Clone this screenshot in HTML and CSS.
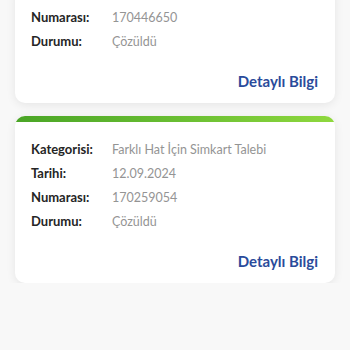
FILE: index.html
```html
<!DOCTYPE html>
<html lang="tr">
<head>
<meta charset="utf-8">
<link rel="stylesheet" href="styles.css">
</head>
<body>
<div class="list">
  <div class="card">
    <div class="bar"></div>
    <div class="body">
      <div class="row"><span class="label">Numarası:</span><span class="value">170446650</span></div>
      <div class="row"><span class="label">Durumu:</span><span class="value">Çözüldü</span></div>
      <div class="actions"><a class="link" href="#">Detaylı Bilgi</a></div>
    </div>
  </div>
  <div class="card">
    <div class="bar"></div>
    <div class="body">
      <div class="row"><span class="label">Kategorisi:</span><span class="value">Farklı Hat İçin Simkart Talebi</span></div>
      <div class="row"><span class="label">Tarihi:</span><span class="value">12.09.2024</span></div>
      <div class="row"><span class="label">Numarası:</span><span class="value">170259054</span></div>
      <div class="row"><span class="label">Durumu:</span><span class="value">Çözüldü</span></div>
      <div class="actions"><a class="link" href="#">Detaylı Bilgi</a></div>
    </div>
  </div>
</div>
</body>
</html>
```
FILE: styles.css
```css
html, body {
  margin: 0;
  padding: 0;
  background: #f8f8f8;
  font-family: "Lato", "Noto Sans", sans-serif;
  overflow: hidden;
}
.list {
  display: flex;
  flex-direction: column;
  gap: 13px;
  padding: 0 15px;
  margin-top: -16px;
}
.card {
  background: #ffffff;
  border-radius: 10px;
  overflow: hidden;
  box-shadow: 0 2px 10px rgba(0, 0, 0, 0.08);
}
.bar {
  height: 6px;
  background: linear-gradient(90deg, #4aa526 0%, #6cc033 55%, #8fd83e 100%);
}
.body {
  padding: 15px 16px 12px 16px;
}
.row {
  display: flex;
  height: 24px;
  align-items: center;
}
.label {
  width: 81px;
  flex: none;
  font-weight: 700;
  font-size: 13px;
  color: #252525;
}
.value {
  font-size: 12.5px;
  font-weight: 400;
  color: #949494;
}
.actions {
  display: flex;
  justify-content: flex-end;
  margin-top: 18px;
  height: 20px;
  align-items: center;
}
.link {
  font-weight: 700;
  font-size: 15px;
  color: #2a4b9b;
  text-decoration: none;
  margin-right: 1px;
}
```
